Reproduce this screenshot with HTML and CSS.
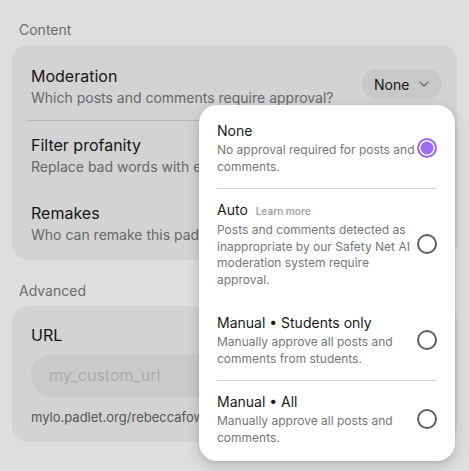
FILE: index.html
```html
<!DOCTYPE html>
<html lang="en">
<head>
<meta charset="utf-8">
<title>Settings</title>
<link rel="stylesheet" href="styles.css">
</head>
<body>
<div class="panel">
  <section class="group">
    <h2 class="group-label">Content</h2>
    <div class="card">
      <div class="row row-divided">
        <div class="row-text">
          <div class="row-title">Moderation</div>
          <div class="row-sub">Which posts and comments require approval?</div>
        </div>
        <button class="select" type="button">None
          <svg class="chev" width="10" height="6" viewBox="0 0 10 6"><path d="M1 1l4 4 4-4" fill="none" stroke="#666" stroke-width="1.2" stroke-linecap="round" stroke-linejoin="round"/></svg>
        </button>
      </div>
      <div class="row">
        <div class="row-text row-text-clip">
          <div class="row-title">Filter profanity</div>
          <div class="row-sub">Replace bad words with emojis</div>
        </div>
      </div>
      <div class="row">
        <div class="row-text row-text-clip">
          <div class="row-title">Remakes</div>
          <div class="row-sub">Who can remake this padlet?</div>
        </div>
      </div>
    </div>
  </section>

  <section class="group">
    <h2 class="group-label">Advanced</h2>
    <div class="card card-url">
      <div class="row-title">URL</div>
      <div class="input">my_custom_url</div>
      <div class="helper">mylo.padlet.org/rebeccafowers</div>
    </div>
  </section>

  <div class="popup">
    <div class="option">
      <div class="opt-text">
        <div class="opt-title">None</div>
        <div class="opt-desc">No approval required for posts and comments.</div>
      </div>
      <span class="radio radio-on"></span>
    </div>
    <div class="sep"></div>
    <div class="option">
      <div class="opt-text">
        <div class="opt-title">Auto <span class="learn">Learn more</span></div>
        <div class="opt-desc">Posts and comments detected as inappropriate by our Safety Net AI moderation system require approval.</div>
      </div>
      <span class="radio"></span>
    </div>
    <div class="gap"></div>
    <div class="option">
      <div class="opt-text">
        <div class="opt-title">Manual • Students only</div>
        <div class="opt-desc">Manually approve all posts and comments from students.</div>
      </div>
      <span class="radio"></span>
    </div>
    <div class="sep"></div>
    <div class="option">
      <div class="opt-text">
        <div class="opt-title">Manual • All</div>
        <div class="opt-desc">Manually approve all posts and comments.</div>
      </div>
      <span class="radio"></span>
    </div>
  </div>
</div>
</body>
</html>
```

FILE: styles.css
```css
* { box-sizing: border-box; }

html, body {
  margin: 0;
  height: 100%;
}

body {
  background: #dedede;
  font-family: Inter, "Noto Sans", sans-serif;
  color: #151515;
  overflow: hidden;
}

.panel {
  position: relative;
  width: 469px;
  padding: 20px 12px 0 12px;
}

.group + .group {
  margin-top: 21px;
}

.group-label {
  margin: 0 0 5px 7px;
  font-size: 14px;
  line-height: 20px;
  font-weight: 400;
  color: #6b6b6b;
}

.card {
  width: 445px;
  background: #d3d3d3;
  border-radius: 16px;
  padding: 7px 15px 3px 15px;
}

.row {
  display: flex;
  align-items: center;
  padding: 12px 4px;
}

.row-divided {
  border-bottom: 1px solid #b8b8b8;
}

.row-text {
  flex: 1;
  min-width: 0;
  white-space: nowrap;
  overflow: hidden;
}

.row-text-clip {
  flex: none;
  width: 168px;
}

.row-title {
  font-size: 16px;
  line-height: 24px;
  color: #151515;
}

.row-sub {
  font-size: 14px;
  line-height: 20px;
  color: #686868;
}

.select {
  flex: none;
  display: flex;
  align-items: center;
  gap: 10px;
  height: 30px;
  width: 80px;
  margin: -4px -4px 0 0;
  padding: 0 12px;
  border: 0;
  border-radius: 15px;
  background: #c8c8c8;
  font-family: inherit;
  font-size: 14px;
  color: #151515;
}

.card-url {
  padding: 17px 19px 16px 19px;
  overflow: hidden;
}

.input {
  margin-top: 7px;
  height: 43px;
  border-radius: 22px;
  background: #cacaca;
  padding: 0 18px;
  font-size: 16px;
  line-height: 43px;
  color: #ababab;
  width: 420px;
}

.helper {
  margin-top: 11px;
  font-size: 13px;
  line-height: 18px;
  color: #555;
  white-space: nowrap;
}

.popup {
  position: absolute;
  left: 199px;
  top: 105px;
  width: 256px;
  background: #fff;
  border-radius: 18px;
  padding: 5px 0 2px 0;
  box-shadow: 0 4px 14px rgba(0, 0, 0, 0.18), 0 1px 3px rgba(0, 0, 0, 0.08);
}

.option {
  display: flex;
  align-items: center;
  padding: 11px 18px 13px 18px;
}

.opt-text {
  flex: 1;
  min-width: 0;
}

.opt-title {
  font-size: 14px;
  line-height: 20px;
  color: #1a1a1a;
}

.learn {
  margin-left: 4px;
  font-size: 10px;
  font-weight: 600;
  color: #a3a3a3;
}

.opt-desc {
  margin-top: 1px;
  font-size: 12px;
  line-height: 16.5px;
  color: #777;
}

.sep {
  height: 1px;
  margin: 0 18px;
  background: #d4d4d4;
}

.gap {
  height: 1px;
}

.radio {
  flex: none;
  width: 20px;
  height: 20px;
  border-radius: 50%;
  border: 2px solid #5c5c5c;
}

.radio-on {
  border-color: #9b6cf2;
  background: #9b6cf2;
  box-shadow: inset 0 0 0 1.5px #fff;
}
```
